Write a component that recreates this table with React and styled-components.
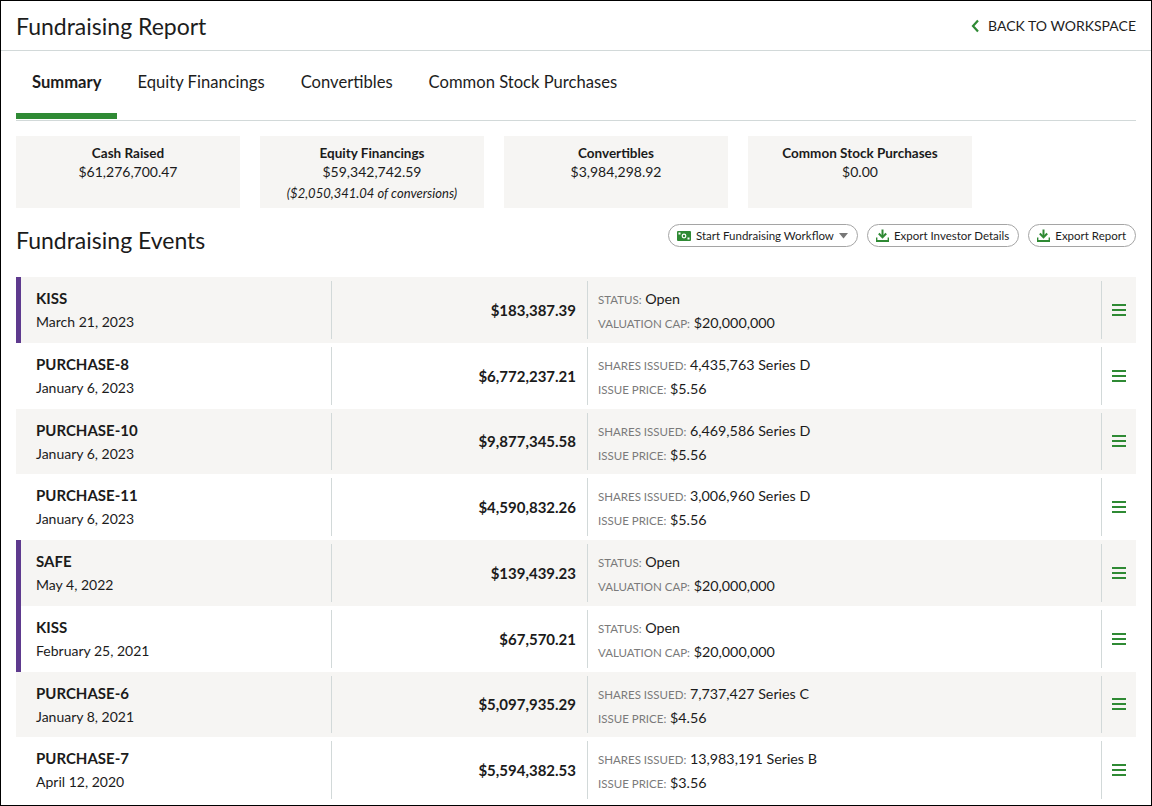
import React from "react";
import styled, { createGlobalStyle } from "styled-components";

const GlobalStyle = createGlobalStyle`
  * { box-sizing: border-box; }
  html, body { margin: 0; padding: 0; background: #fff; }
  body {
    font-family: Lato, "Noto Sans", sans-serif;
    color: #1b1b1b;
  }
`;

const green = "#2f8a34";
const stripe = "#f6f5f3";
const rule = "#d2d9d9";

const summary = [
  { title: "Cash Raised", value: "$61,276,700.47" },
  {
    title: "Equity Financings",
    value: "$59,342,742.59",
    note: "($2,050,341.04 of conversions)",
  },
  { title: "Convertibles", value: "$3,984,298.92" },
  { title: "Common Stock Purchases", value: "$0.00" },
];

const events = [
  {
    name: "KISS",
    date: "March 21, 2023",
    amount: "$183,387.39",
    convertible: true,
    a: ["STATUS:", "Open"],
    b: ["VALUATION CAP:", "$20,000,000"],
  },
  {
    name: "PURCHASE-8",
    date: "January 6, 2023",
    amount: "$6,772,237.21",
    a: ["SHARES ISSUED:", "4,435,763 Series D"],
    b: ["ISSUE PRICE:", "$5.56"],
  },
  {
    name: "PURCHASE-10",
    date: "January 6, 2023",
    amount: "$9,877,345.58",
    a: ["SHARES ISSUED:", "6,469,586 Series D"],
    b: ["ISSUE PRICE:", "$5.56"],
  },
  {
    name: "PURCHASE-11",
    date: "January 6, 2023",
    amount: "$4,590,832.26",
    a: ["SHARES ISSUED:", "3,006,960 Series D"],
    b: ["ISSUE PRICE:", "$5.56"],
  },
  {
    name: "SAFE",
    date: "May 4, 2022",
    amount: "$139,439.23",
    convertible: true,
    a: ["STATUS:", "Open"],
    b: ["VALUATION CAP:", "$20,000,000"],
  },
  {
    name: "KISS",
    date: "February 25, 2021",
    amount: "$67,570.21",
    convertible: true,
    a: ["STATUS:", "Open"],
    b: ["VALUATION CAP:", "$20,000,000"],
  },
  {
    name: "PURCHASE-6",
    date: "January 8, 2021",
    amount: "$5,097,935.29",
    a: ["SHARES ISSUED:", "7,737,427 Series C"],
    b: ["ISSUE PRICE:", "$4.56"],
  },
  {
    name: "PURCHASE-7",
    date: "April 12, 2020",
    amount: "$5,594,382.53",
    a: ["SHARES ISSUED:", "13,983,191 Series B"],
    b: ["ISSUE PRICE:", "$3.56"],
  },
];

const tabs = ["Summary", "Equity Financings", "Convertibles", "Common Stock Purchases"];

//icons
const Chevron = () => (
  <svg width="9" height="14" viewBox="0 0 9 14">
    <path d="M7 1.5 L2 7 L7 12.5" fill="none" stroke={green} strokeWidth="2.2" />
  </svg>
);

const MoneyIcon = () => (
  <svg width="14" height="10" viewBox="0 0 14 10">
    <rect x="0" y="0" width="14" height="10" rx="1" fill={green} />
    <circle cx="7" cy="5" r="2.4" fill="#fff" />
    <circle cx="7" cy="5" r="1.2" fill={green} />
    <rect x="1.5" y="1.5" width="2" height="2" fill="#fff" />
    <rect x="10.5" y="6.5" width="2" height="2" fill="#fff" />
  </svg>
);

const Caret = () => (
  <svg width="9" height="6" viewBox="0 0 9 6">
    <path d="M0 0 H9 L4.5 5.5 Z" fill="#777" />
  </svg>
);

const DownloadIcon = () => (
  <svg width="13" height="13" viewBox="0 0 13 13">
    <path d="M6.5 0.5 V7.5" stroke={green} strokeWidth="2" />
    <path d="M2.8 4.5 L6.5 8.3 L10.2 4.5" fill="none" stroke={green} strokeWidth="2" />
    <path d="M0.5 8.5 V12 H12.5 V8.5" fill="none" stroke={green} strokeWidth="1.8" />
  </svg>
);

const MenuIcon = () => (
  <svg width="14" height="12" viewBox="0 0 14 12">
    <rect x="0" y="0" width="14" height="2" fill={green} />
    <rect x="0" y="5" width="14" height="2" fill={green} />
    <rect x="0" y="10" width="14" height="2" fill={green} />
  </svg>
);

const App = () => {
  return (
    <>
      <GlobalStyle />
      <Frame>
        <Header>
          <PageTitle>Fundraising Report</PageTitle>
          <BackLink>
            <Chevron />
            BACK TO WORKSPACE
          </BackLink>
        </Header>
        <Body>
          <TabBar>
            {tabs.map((t, i) => (
              <Tab key={t} active={i === 0}>
                {t}
              </Tab>
            ))}
          </TabBar>

          {/* summary cards */}
          <Cards>
            {summary.map((c) => (
              <Card key={c.title}>
                <CardTitle>{c.title}</CardTitle>
                <CardValue>{c.value}</CardValue>
                {c.note && <CardNote>{c.note}</CardNote>}
              </Card>
            ))}
          </Cards>

          <EventsHead>
            <SectionTitle>Fundraising Events</SectionTitle>
            <Actions>
              <PillButton>
                <MoneyIcon />
                Start Fundraising Workflow
                <Caret />
              </PillButton>
              <PillButton>
                <DownloadIcon />
                Export Investor Details
              </PillButton>
              <PillButton>
                <DownloadIcon />
                Export Report
              </PillButton>
            </Actions>
          </EventsHead>

          <EventList>
            {events.map((e, i) => (
              <EventRow key={i} shaded={i % 2 === 0} convertible={e.convertible}>
                <NameCell>
                  <EventName>{e.name}</EventName>
                  <EventDate>{e.date}</EventDate>
                </NameCell>
                <AmountCell>{e.amount}</AmountCell>
                <DetailCell>
                  <Detail>
                    <DetailLabel>{e.a[0]}</DetailLabel> {e.a[1]}
                  </Detail>
                  <Detail>
                    <DetailLabel>{e.b[0]}</DetailLabel> {e.b[1]}
                  </Detail>
                </DetailCell>
                <MenuCell>
                  <MenuIcon />
                </MenuCell>
              </EventRow>
            ))}
          </EventList>
        </Body>
      </Frame>
    </>
  );
};

const Frame = styled.div`
  height: 100vh;
  border: 1px solid #000;
  overflow: hidden;
`;

const Header = styled.div`
  height: 50px;
  display: flex;
  align-items: center;
  justify-content: space-between;
  padding: 0 15px;
  border-bottom: 1px solid ${rule};
`;

const PageTitle = styled.h1`
  margin: 0;
  font-size: 23px;
  font-weight: 400;
  color: #1d1d1d;
`;

const BackLink = styled.a`
  display: flex;
  align-items: center;
  gap: 8px;
  font-size: 14px;
  color: #1d1d1d;
  cursor: pointer;
`;

const Body = styled.div`
  padding: 0 15px;
`;

const TabBar = styled.div`
  display: flex;
  gap: 4px;
  height: 70px;
  border-bottom: 1px solid ${rule};
`;

const Tab = styled.div`
  position: relative;
  padding: 21px 16px 0;
  font-size: 16.6px;
  font-weight: ${(p) => (p.active ? 700 : 400)};
  color: #1d1d1d;
  &::after {
    content: "";
    position: absolute;
    left: 0;
    right: 0;
    bottom: 1px;
    height: 6px;
    background: ${(p) => (p.active ? green : "transparent")};
  }
`;

const Cards = styled.div`
  display: flex;
  gap: 20px;
  margin-top: 15px;
`;

const Card = styled.div`
  width: 224px;
  height: 72px;
  background: ${stripe};
  padding-top: 8px;
  text-align: center;
`;

const CardTitle = styled.div`
  font-size: 13.5px;
  font-weight: 700;
  line-height: 18px;
`;

const CardValue = styled.div`
  font-size: 14px;
  line-height: 20px;
`;

const CardNote = styled.div`
  font-size: 13px;
  font-style: italic;
  line-height: 22px;
`;

const EventsHead = styled.div`
  display: flex;
  align-items: center;
  justify-content: space-between;
  margin-top: 16px;
  height: 31px;
`;

const SectionTitle = styled.h2`
  margin: 0;
  font-size: 23px;
  font-weight: 400;
`;

const Actions = styled.div`
  display: flex;
  gap: 9px;
  align-self: flex-start;
`;

const PillButton = styled.button`
  display: flex;
  align-items: center;
  gap: 5px;
  height: 23px;
  padding: 0 9px 0 8px;
  background: #fff;
  border: 1px solid #a5a5a5;
  border-radius: 12px;
  font-family: inherit;
  font-size: 11.5px;
  color: #1d1d1d;
  cursor: pointer;
`;

const EventList = styled.div`
  margin-top: 22px;
`;

const EventRow = styled.div`
  display: grid;
  grid-template-columns: 316px 256px 1fr 34px;
  height: 65.75px;
  padding: 4px 0;
  background: ${(p) => (p.shaded ? stripe : "#fff")};
  box-shadow: ${(p) => (p.convertible ? "inset 5px 0 0 #5e3a8e" : "none")};
`;

const NameCell = styled.div`
  padding: 7px 20px 0;
  border-right: 1px solid ${rule};
`;

const EventName = styled.div`
  font-size: 15px;
  font-weight: 700;
  line-height: 20px;
`;

const EventDate = styled.div`
  font-size: 14px;
  line-height: 28px;
`;

const AmountCell = styled.div`
  display: flex;
  align-items: center;
  justify-content: flex-end;
  padding-right: 11px;
  font-size: 15px;
  font-weight: 700;
  border-right: 1px solid ${rule};
`;

const DetailCell = styled.div`
  padding: 6px 10px 0;
  border-right: 1px solid ${rule};
`;

const Detail = styled.div`
  font-size: 14.3px;
  line-height: 23px;
`;

const DetailLabel = styled.span`
  font-size: 11.5px;
  color: #7a7a7a;
`;

const MenuCell = styled.div`
  display: flex;
  align-items: center;
  justify-content: center;
  cursor: pointer;
`;

export default App;
